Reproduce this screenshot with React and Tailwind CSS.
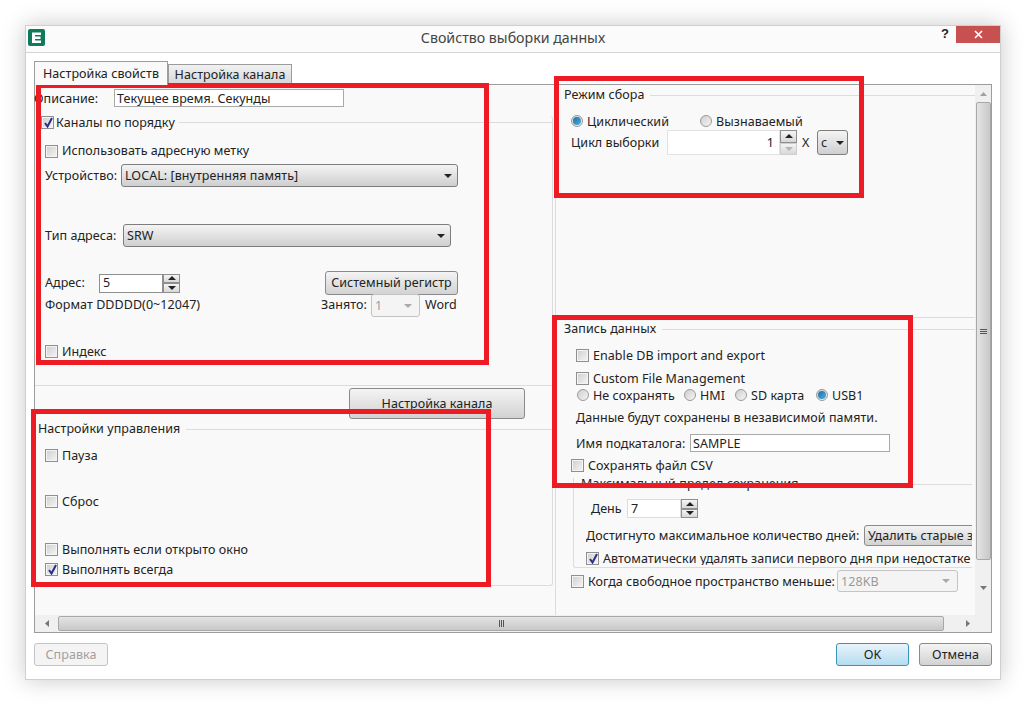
import React from "react";

const Arrow = ({ up, color = "#222" }) => (
  <svg width="8" height="4" viewBox="0 0 8 4" className="shrink-0">
    <polygon points={up ? "4,0 8,4 0,4" : "0,0 8,0 4,4"} fill={color} />
  </svg>
);

const Check = ({ checked, className = "" }) => (
  <span className={`relative flex w-[13px] h-[13px] shrink-0 border border-[#8f8f8f] bg-[#f4f4f4] p-px ${className}`}>
    <span className="w-full h-full bg-gradient-to-br from-[#d2d2d2] to-[#f2f2f2]" />
    {checked && (
      <svg width="11" height="11" viewBox="0 0 11 11" className="absolute left-px top-0">
        <path d="M2 6 L4.5 9.5 L9 1" fill="none" stroke="#2b2f8c" strokeWidth="2" />
      </svg>
    )}
  </span>
);

const Radio = ({ checked }) => (
  <span className="flex items-center justify-center w-[12px] h-[12px] shrink-0 rounded-full border border-[#9a9a9a] bg-gradient-to-br from-[#cfcfcf] to-[#f5f5f5]">
    {checked && <span className="w-[8px] h-[8px] rounded-full bg-gradient-to-br from-[#1c6ea8] to-[#4fb0e0]" />}
  </span>
);

const CheckRow = ({ label, checked, className = "" }) => (
  <div className={`flex items-center h-[12px] ${className}`}>
    <Check checked={checked} />
    <span className="ml-[4px] pt-[2px] whitespace-nowrap">{label}</span>
  </div>
);

const RadioItem = ({ label, checked, className = "" }) => (
  <div className={`flex items-center ${className}`}>
    <Radio checked={checked} />
    <span className="ml-[4px] pt-[2px] whitespace-nowrap">{label}</span>
  </div>
);

const Legend = ({ children, className = "" }) => (
  <div className={`flex items-center h-[12px] ${className}`}>
    <span className="whitespace-nowrap">{children}</span>
    <span className="flex-1 h-px ml-[6px] bg-[#dcdcdc]" />
  </div>
);

const Label = ({ children, className = "" }) => (
  <span className={`pt-[2px] whitespace-nowrap ${className}`}>{children}</span>
);

const Select = ({ value, className = "", disabled }) => (
  <div
    className={`flex items-center justify-between rounded-[3px] border pl-[3px] ${
      disabled
        ? "pr-[7px] border-[#c4c4c4] bg-[#f4f4f4] text-[#9a9a9a]"
        : "pr-[5px] border-[#7d7d7d] bg-gradient-to-b from-[#f4f4f4] to-[#cfcfcf]"
    } ${className}`}
  >
    <span className="pt-[2px]">{value}</span>
    <Arrow color={disabled ? "#aaa" : "#222"} />
  </div>
);

const Spinner = ({ dim }) => (
  <div className="flex flex-col w-[17px] shrink-0 h-full">
    <div className="flex-1 flex items-center justify-center border border-[#8f8f8f] bg-gradient-to-b from-[#f4f4f4] to-[#d8d8d8]">
      <Arrow up />
    </div>
    <div className={`flex-1 flex items-center justify-center border bg-gradient-to-b from-[#f4f4f4] to-[#d8d8d8] ${dim ? "border-[#cfcfcf]" : "border-[#8f8f8f]"}`}>
      <Arrow color={dim ? "#b5b5b5" : "#222"} />
    </div>
  </div>
);

const Btn = ({ children, className = "" }) => (
  <div className={`flex items-center justify-center rounded-[3px] border border-[#8a8a8a] bg-gradient-to-b from-[#f4f4f4] to-[#d2d2d2] whitespace-nowrap ${className}`}>
    {children}
  </div>
);

const RedBox = ({ className }) => (
  <div className={`absolute border-[5px] border-[#ed1c24] pointer-events-none ${className}`} />
);

export default function App() {
  return (
    <div className="relative w-[1026px] h-[705px] bg-white pt-[25px] pl-[25px] overflow-hidden font-['Noto_Sans',sans-serif] text-[12.5px] leading-none tracking-[0.06px] text-[#222]">
      <div className="flex flex-col w-[976px] h-[655px] bg-white border border-[#cfcfcf] shadow-[0_0_22px_rgba(0,0,0,0.22)]">
        {/* title bar */}
        <div className="relative flex items-center justify-center h-[27px] pb-[2px] shrink-0 border-b border-[#d4d4d4] bg-[#fbfbfb]">
          <svg width="17" height="17" viewBox="0 0 17 17" className="absolute left-[2px] top-[3px]">
            <rect width="17" height="17" rx="2" fill="#0f7a5a" />
            <path d="M4 3.5H13V6H7V7.5H12.5V10H7V11.5H13V14H4Z" fill="#fff" />
          </svg>
          <span className="text-[14.2px] tracking-normal text-[#444]">Свойство выборки данных</span>
          <span className="absolute right-[51px] top-[1px] text-[13px] font-bold font-['Liberation_Sans',sans-serif]">?</span>
          <div className="absolute right-0 top-0 flex items-center justify-center w-[44px] h-[17px] bg-[#c75050]">
            <svg width="9" height="9" viewBox="0 0 9 9">
              <path d="M1 1 L8 8 M8 1 L1 8" stroke="#fff" strokeWidth="1.6" />
            </svg>
          </div>
        </div>

        {/* tabs */}
        <div className="flex items-end h-[31px] shrink-0 pl-[8px]">
          <div className="relative z-10 flex items-center justify-center w-[134px] h-[24px] pt-[2px] -mb-px border border-b-0 border-[#9c9c9c] bg-[#f9f9f9]">
            Настройка свойств
          </div>
          <div className="flex items-center justify-center w-[124px] h-[20px] pt-[2px] border border-b-0 border-[#9c9c9c] bg-gradient-to-b from-[#f2f2f2] to-[#d6d6d6]">
            Настройка канала
          </div>
        </div>

        {/* panel */}
        <div className="flex flex-col w-[958px] h-[549px] ml-[8px] border border-[#9c9c9c] bg-[#f9f9f9]">
          <div className="flex h-[530px] shrink-0">
            {/* left column */}
            <div className="w-[520px] shrink-0">
              <div className="flex items-center h-[18px] mt-[4px] -ml-px">
                <Label className="w-[80px]">Описание:</Label>
                <div className="flex items-center w-[230px] h-[18px] pl-[2px] pt-[2px] border border-[#a9a9a9] bg-white">Текущее время. Секунды</div>
              </div>

              <div className="h-[470px] mt-[15px] mr-[2px] border-r border-b border-[#dcdcdc] rounded-tr-[3px] rounded-br-[3px]">
                <div className="flex items-center h-[12px] -mt-[6px] ml-[6px]">
                  <Check checked />
                  <Label className="ml-[2px]">Каналы по порядку</Label>
                  <span className="flex-1 h-px ml-[4px] bg-[#dcdcdc]" />
                </div>
                <div className="flex items-center h-[12px] mt-[17px] ml-[10px]">
                  <Check />
                  <span className="ml-[4px] whitespace-nowrap">Использовать адресную метку</span>
                </div>
                <div className="flex items-center h-[23px] mt-[7px] ml-[10px]">
                  <Label className="w-[76px]">Устройство:</Label>
                  <Select value="LOCAL: [внутренняя память]" className="w-[337px] h-[23px]" />
                </div>
                <div className="flex items-center h-[23px] mt-[37px] ml-[10px]">
                  <Label className="w-[78px]">Тип адреса:</Label>
                  <Select value="SRW" className="w-[328px] h-[23px]" />
                </div>
                <div className="flex items-center h-[24px] mt-[24px] ml-[10px]">
                  <span className="w-[54px] whitespace-nowrap">Адрес:</span>
                  <div className="flex items-center w-[64px] h-[19px] pl-[3px] border border-[#8f8f8f] bg-white">5</div>
                  <div className="h-[19px]">
                    <Spinner />
                  </div>
                  <Btn className="w-[133px] h-[24px] ml-[145px]">Системный регистр</Btn>
                </div>
                <div className="flex items-center h-[25px] -mt-[2px] ml-[10px]">
                  <span className="w-[276px] whitespace-nowrap">Формат DDDDD(0~12047)</span>
                  <span className="w-[50px] whitespace-nowrap">Занято:</span>
                  <Select value="1" disabled className="w-[49px] h-[23px]" />
                  <span className="ml-[5px] whitespace-nowrap">Word</span>
                </div>
                <CheckRow label="Индекс" className="mt-[27px] ml-[10px]" />
                <div className="h-px mt-[28px] bg-[#dcdcdc]" />
                <div className="flex h-[31px] mt-[2px] ml-[314px]">
                  <Btn className="w-[176px] h-[31px] pt-[2px]">Настройка канала</Btn>
                </div>
                <Legend className="mt-[4px] ml-[3px]">Настройки управления</Legend>
                <CheckRow label="Пауза" className="mt-[14px] ml-[10px]" />
                <CheckRow label="Сброс" className="mt-[34px] ml-[10px]" />
                <CheckRow label="Выполнять если открыто окно" className="mt-[36px] ml-[10px]" />
                <CheckRow label="Выполнять всегда" checked className="mt-[8px] ml-[10px]" />
              </div>
            </div>

            {/* right column */}
            <div className="w-[420px] shrink-0 border-l border-[#dcdcdc] overflow-hidden">
              <Legend className="mt-[4px] ml-[8px]">Режим сбора</Legend>
              <div className="flex items-center h-[12px] mt-[14px] ml-[15px]">
                <RadioItem label="Циклический" checked className="w-[129px]" />
                <RadioItem label="Вызнаваемый" />
              </div>
              <div className="flex items-center h-[25px] mt-[3px] ml-[15px]">
                <Label className="w-[96px]">Цикл выборки</Label>
                <div className="flex items-center justify-end w-[113px] h-[25px] pr-[5px] pt-[2px] border border-[#e2e2e2] bg-white">1</div>
                <Spinner dim />
                <Label className="ml-[5px] w-[15px]">X</Label>
                <Select value="c" className="w-[31px] h-[25px] !pr-[3px]" />
              </div>

              <div className="h-px mt-[162px] bg-[#dcdcdc]" />
              <Legend className="mt-[5px] ml-[8px]">Запись данных</Legend>
              <CheckRow label="Enable DB import and export" className="mt-[14px] ml-[20px]" />
              <CheckRow label="Custom File Management" className="mt-[11px] ml-[20px]" />
              <div className="flex items-center h-[12px] mt-[5px] ml-[21px]">
                <RadioItem label="Не сохранять" className="w-[107px]" />
                <RadioItem label="HMI" className="w-[51px]" />
                <RadioItem label="SD карта" className="w-[81px]" />
                <RadioItem label="USB1" checked />
              </div>
              <div className="flex items-center h-[12px] mt-[10px] ml-[20px]">
                <Label>Данные будут сохранены в независимой памяти.</Label>
              </div>
              <div className="flex items-center h-[18px] mt-[11px] ml-[20px]">
                <Label className="w-[114px]">Имя подкаталога:</Label>
                <div className="flex items-center w-[200px] h-[18px] pl-[2px] pt-[2px] border border-[#a9a9a9] bg-white">SAMPLE</div>
              </div>
              <CheckRow label="Сохранять файл CSV" className="mt-[7px] ml-[15px]" />

              <div className="h-[90px] mt-[13px] ml-[17px] mr-[3px] border-l border-b border-[#dcdcdc] rounded-bl-[3px]">
                <Legend className="-mt-[6px] ml-[7px]">Максимальный предел сохранения</Legend>
                <div className="flex items-center h-[19px] mt-[9px] ml-[17px]">
                  <Label className="w-[36px]">День</Label>
                  <div className="flex items-center w-[54px] h-[19px] pl-[3px] pt-[2px] border border-[#dcdcdc] bg-white">7</div>
                  <div className="h-[19px]">
                    <Spinner />
                  </div>
                </div>
                <div className="flex items-center h-[21px] mt-[7px] ml-[12px] overflow-hidden">
                  <Label className="w-[278px] shrink-0">Достигнуто максимальное количество дней:</Label>
                  <Btn className="w-[130px] h-[21px] shrink-0 !justify-start pl-[3px] pt-[2px]">Удалить старые записи</Btn>
                </div>
                <div className="flex items-center h-[14px] mt-[5px] ml-[12px] overflow-hidden">
                  <Check checked />
                  <Label className="ml-[4px]">Автоматически удалять записи первого дня при недостатке</Label>
                </div>
              </div>
              <div className="flex items-center h-[22px] mt-[2px] ml-[15px]">
                <Check />
                <Label className="ml-[4px] w-[249px]">Когда свободное пространство меньше:</Label>
                <Select value="128KB" disabled className="w-[121px] h-[22px]" />
              </div>
            </div>

            {/* vertical scrollbar */}
            <div className="flex flex-col items-center w-[16px] shrink-0 bg-[#f0f0f0]">
              <div className="flex items-center justify-center h-[17px] shrink-0">
                <svg width="7" height="4" viewBox="0 0 7 4"><polygon points="3.5,0 7,4 0,4" fill="#a0a0a0" /></svg>
              </div>
              <div className="flex items-center justify-center w-[15px] h-[458px] border border-[#a8a8a8] rounded-[2px] bg-gradient-to-r from-[#e4e4e4] to-[#c8c8c8]">
                <div className="flex flex-col gap-px w-[7px]">
                  <span className="h-px bg-[#555]" />
                  <span className="h-px bg-[#555]" />
                  <span className="h-px bg-[#555]" />
                </div>
              </div>
              <div className="flex flex-1 items-center justify-center">
                <svg width="7" height="4" viewBox="0 0 7 4"><polygon points="0,0 7,0 3.5,4" fill="#777" /></svg>
              </div>
            </div>
          </div>

          {/* horizontal scrollbar */}
          <div className="flex items-center flex-1 bg-[#f0f0f0]">
            <div className="flex items-center justify-center w-[23px] shrink-0">
              <svg width="4" height="7" viewBox="0 0 4 7"><polygon points="4,0 4,7 0,3.5" fill="#777" /></svg>
            </div>
            <div className="flex items-center justify-center w-[886px] h-[15px] border border-[#a8a8a8] rounded-[2px] bg-gradient-to-b from-[#e4e4e4] to-[#c8c8c8]">
              <div className="flex gap-px h-[7px]">
                <span className="w-px bg-[#555]" />
                <span className="w-px bg-[#555]" />
                <span className="w-px bg-[#555]" />
              </div>
            </div>
            <div className="flex flex-1 items-center justify-center">
              <svg width="4" height="7" viewBox="0 0 4 7"><polygon points="0,0 4,3.5 0,7" fill="#777" /></svg>
            </div>
          </div>
        </div>

        {/* footer */}
        <div className="flex items-center h-[23px] mt-[10px] ml-[8px] w-[958px]">
          <div className="flex items-center justify-center w-[74px] h-[23px] pt-[2px] rounded-[3px] border border-[#c4c4c4] bg-[#f4f4f4] text-[#a0a0a0]">Справка</div>
          <div className="flex items-center justify-center w-[73px] h-[23px] pt-[2px] ml-[728px] rounded-[3px] border border-[#3c93b8] bg-gradient-to-b from-[#e8f4fb] to-[#b4dcf0]">OK</div>
          <Btn className="w-[73px] h-[23px] ml-[10px] pt-[2px]">Отмена</Btn>
        </div>
      </div>

      {/* red annotation frames */}
      <RedBox className="left-[36px] top-[83px] w-[453px] h-[282px]" />
      <RedBox className="left-[554px] top-[76px] w-[310px] h-[122px]" />
      <RedBox className="left-[31px] top-[409px] w-[460px] h-[178px]" />
      <RedBox className="left-[552px] top-[315px] w-[361px] h-[173px]" />
    </div>
  );
}
